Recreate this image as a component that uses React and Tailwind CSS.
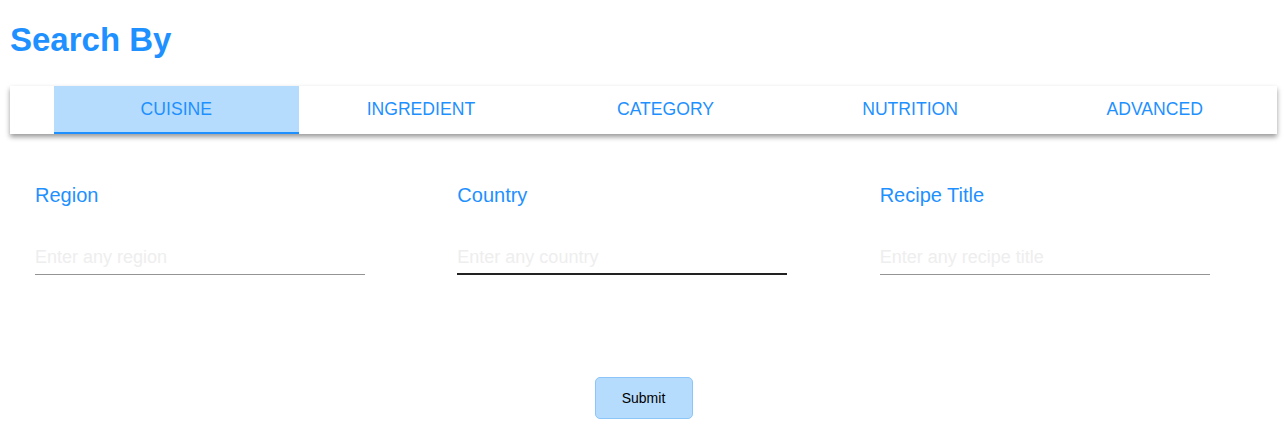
import { useState } from "react"

const tabs = ["Cuisine", "Ingredient", "Category", "Nutrition", "Advanced"]

const fields = [
  { label: "Region", placeholder: "Enter any region" },
  { label: "Country", placeholder: "Enter any country", focused: true },
  { label: "Recipe Title", placeholder: "Enter any recipe title" },
]

export default function App() {
  const [active, setActive] = useState(0)
  return (
    <div className="min-h-[443px] bg-white font-['Liberation_Sans',Arial,sans-serif]">
      <h1 className="pl-[10px] pt-[21px] text-[33px] font-bold leading-[38px] text-[#1e90ff]">Search By</h1>

      <div className="mx-[10px] mt-[27px] flex h-[48px] bg-white pl-[44px] shadow-[0_3px_5px_rgba(0,0,0,0.4)]">
        {tabs.map((t, i) => (
          <button
            key={t}
            onClick={() => setActive(i)}
            className={
              i === active
                ? "flex flex-1 items-center justify-center border-b-2 border-[#1e90ff] bg-[#b6dcfd] text-[17.6px] uppercase text-[#1e90ff]"
                : "flex flex-1 items-center justify-center border-b-2 border-transparent text-[17.6px] uppercase text-[#1e90ff]"
            }
          >
            {t}
          </button>
        ))}
      </div>

      <form className="mx-[10px] mt-[50px] grid grid-cols-3">
        {fields.map((f) => (
          <div key={f.label} className="flex flex-col pl-[25px]">
            <label className="text-[20px] leading-[23px] text-[#1e90ff]">{f.label}</label>
            <input
              placeholder={f.placeholder}
              className={
                f.focused
                  ? "mt-[40px] w-[330px] border-b-2 border-[#222] pb-[5px] text-[18px] leading-[21px] outline-none placeholder:text-[#eeeeee]"
                  : "mt-[40px] w-[330px] border-b border-[#949494] pb-[6px] text-[18px] leading-[21px] outline-none placeholder:text-[#eeeeee]"
              }
            />
          </div>
        ))}
        <div className="col-span-3 mt-[102px] flex justify-center">
          <button
            type="button"
            className="h-[42px] w-[98px] rounded-[5px] border border-[#8cc6f8] bg-[#b6dcfd] text-[14px] text-black"
          >
            Submit
          </button>
        </div>
      </form>
    </div>
  )
}
